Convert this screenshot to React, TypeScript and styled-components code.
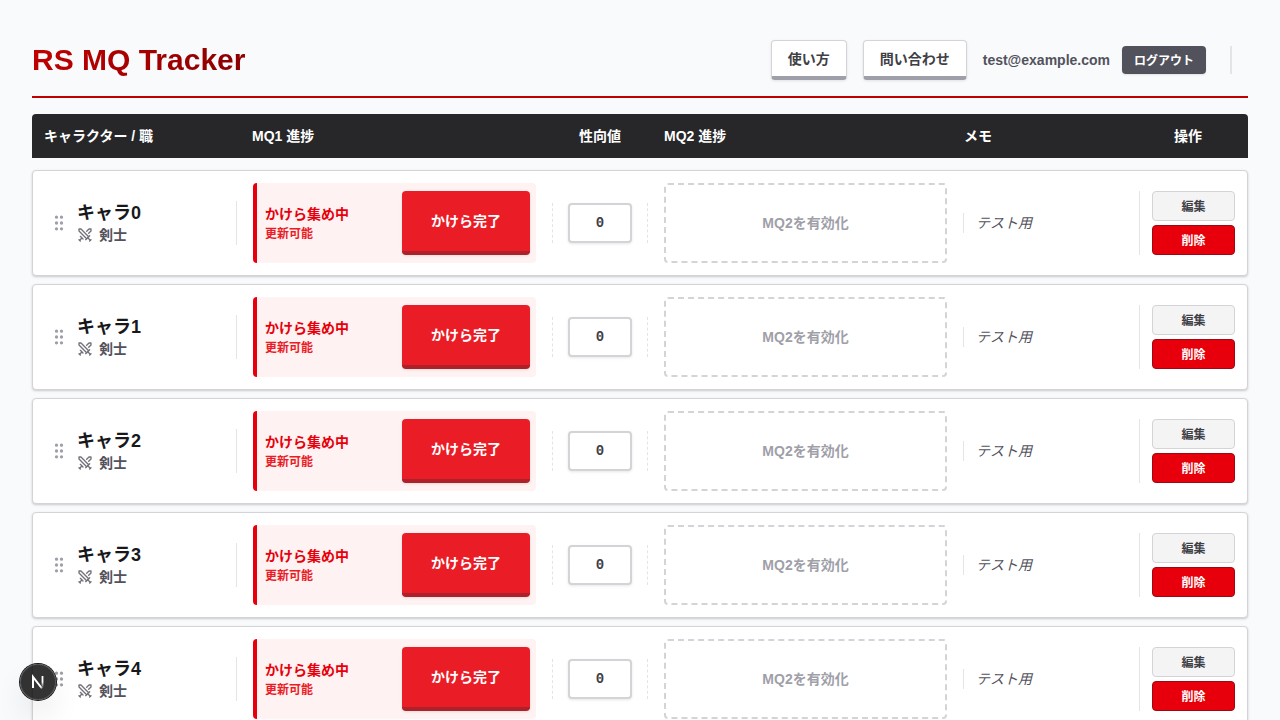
import React, { useState } from "react";
import styled, { createGlobalStyle, css } from "styled-components";
import { GripVertical, Swords } from "lucide-react";

const GlobalStyle = createGlobalStyle`
  *, *::before, *::after { box-sizing: border-box; }
  body {
    margin: 0;
    background: #f9fafc;
    color: #18181b;
    font-family: "Liberation Sans", "Noto Sans CJK JP", sans-serif;
    font-size: 14px;
    line-height: 20px;
  }
  button, input { font: inherit; margin: 0; }
  button { cursor: pointer; }
`;

const Page = styled.main`
  min-height: 100vh;
  padding: 32px;
`;

const TopBar = styled.header`
  display: flex;
  align-items: center;
  justify-content: space-between;
  padding: 8px 0 16px;
  margin-bottom: 16px;
  border-bottom: 2px solid #c00000;
`;

const Title = styled.h1`
  margin: 0;
  font-size: 30px;
  line-height: 36px;
  font-weight: 700;
  color: transparent;
  background: linear-gradient(to right, #c00000, #8b0000);
  background-clip: text;
  -webkit-background-clip: text;
`;

const TopActions = styled.div`
  display: flex;
  align-items: center;
  gap: 16px;
`;

const NavButton = styled.button`
  height: 40px;
  padding: 0 16px;
  border: 1px solid #d4d4d8;
  border-bottom: 4px solid #9f9fa9;
  border-radius: 4px;
  background: #fff;
  color: #3f3f46;
  font-weight: 700;
  box-shadow: 0 1px 3px rgba(0, 0, 0, 0.1);
`;

const Account = styled.div`
  display: flex;
  align-items: center;
  gap: 12px;
  margin-right: 16px;
  padding-right: 24px;
  border-right: 2px solid #e4e4e7;
  color: #52525c;
  font-weight: 700;
`;

const smallButton = css`
  border-radius: 4px;
  font-size: 12px;
  line-height: 16px;
  font-weight: 700;
`;

const LogoutButton = styled.button`
  ${smallButton}
  height: 28px;
  padding: 2px 12px 0;
  border: 0;
  background: #52525c;
  color: #fff;
  box-shadow: 0 1px 2px rgba(0, 0, 0, 0.1);
`;

const columns = css`
  display: grid;
  grid-template-columns: 192px minmax(0, 1fr) 96px minmax(0, 1fr) 160px 96px;
  column-gap: 16px;
  align-items: center;
`;

const ColumnHeader = styled.div`
  ${columns}
  padding: 12px;
  margin-bottom: 12px;
  border-radius: 4px 4px 0 0;
  background: #27272a;
  color: #fff;
  font-weight: 700;
`;

const Heading = styled.span<{ $center?: boolean }>`
  text-align: ${(p) => (p.$center ? "center" : "left")};
`;

const CardList = styled.ul`
  display: grid;
  gap: 8px;
  margin: 0;
  padding: 0;
  list-style: none;
`;

const Card = styled.li`
  ${columns}
  padding: 12px;
  border: 1px solid #d4d4d8;
  border-radius: 4px;
  background: #fff;
  box-shadow: 0 1px 3px rgba(0, 0, 0, 0.1), 0 1px 2px rgba(0, 0, 0, 0.1);
`;

const CharacterCell = styled.div`
  display: flex;
  align-items: center;
  gap: 4px;
  border-right: 1px solid #e4e4e7;
`;

const Handle = styled.button`
  display: flex;
  padding: 4px;
  border: 0;
  background: none;
  color: #9f9fa9;
  cursor: grab;
`;

const Name = styled.div`
  font-size: 18px;
  line-height: 24px;
  font-weight: 700;
`;

const Job = styled.div`
  display: flex;
  align-items: center;
  gap: 6px;
  color: #52525c;
  font-weight: 700;

  svg { color: #71717b; }
`;

const Progress = styled.div`
  display: flex;
  align-items: center;
  justify-content: space-between;
  height: 80px;
  padding: 8px 6px 8px 8px;
  border-left: 4px solid #e7000b;
  border-radius: 4px;
  background: #fef2f2;
`;

const Status = styled.div`
  display: grid;
  gap: 2px;
`;

const Stage = styled.div`
  color: #e7000b;
  font-weight: 700;
`;

const Availability = styled.div`
  color: #ea1d27;
  font-size: 12px;
  line-height: 16px;
  font-weight: 700;
`;

const CompleteButton = styled.button`
  width: 128px;
  height: 64px;
  padding: 0;
  border: 0;
  border-bottom: 4px solid #ac212a;
  border-radius: 4px;
  background: #ea1d27;
  color: #fff;
  font-weight: 700;
  box-shadow: 0 1px 3px rgba(0, 0, 0, 0.1);
`;

const KarmaCell = styled.div`
  display: flex;
  justify-content: center;
  border: 1px dashed #e4e4e7;
  border-width: 0 1px;
`;

const KarmaInput = styled.input`
  width: 64px;
  height: 40px;
  padding: 0;
  border: 2px solid #d4d4d8;
  border-radius: 4px;
  background: #fff;
  color: #3f3f46;
  font-family: "Liberation Mono", monospace;
  font-weight: 700;
  text-align: center;
  box-shadow: 0 1px 3px rgba(0, 0, 0, 0.1);
`;

const EnableButton = styled.button`
  height: 80px;
  border: 2px dashed #d4d4d8;
  border-radius: 4px;
  background: none;
  color: #9f9fa9;
  font-weight: 700;
`;

const Memo = styled.div`
  padding-left: 12px;
  border-left: 1px solid #e4e4e7;
  color: #52525c;
  font-style: italic;
`;

const RowActions = styled.div`
  display: grid;
  gap: 4px;
  padding-left: 12px;
  border-left: 1px solid #e4e4e7;
`;

const RowButton = styled.button<{ $danger?: boolean }>`
  ${smallButton}
  height: 30px;
  padding: 2px 0 0;
  border: 1px solid ${(p) => (p.$danger ? "#9f0712" : "#d4d4d8")};
  background: ${(p) => (p.$danger ? "#e7000b" : "#f4f4f5")};
  color: ${(p) => (p.$danger ? "#fff" : "#3f3f46")};
`;

const DevBadge = styled.button`
  position: fixed;
  left: 20px;
  bottom: 20px;
  display: flex;
  align-items: center;
  justify-content: center;
  width: 36px;
  height: 36px;
  padding: 0;
  border: 0;
  border-radius: 50%;
  background: rgba(0, 0, 0, 0.8);
  box-shadow: 0 0 0 1px #171717, inset 0 0 0 1px rgba(255, 255, 255, 0.14),
    0 16px 32px -8px rgba(0, 0, 0, 0.24);
`;

const characters = ["キャラ0", "キャラ1", "キャラ2", "キャラ3", "キャラ4"];

function CharacterCard({ name }: { name: string }) {
  const [karma, setKarma] = useState("0");
  return (
    <Card>
      <CharacterCell>
        <Handle type="button" aria-label="並び替え">
          <GripVertical size={20} />
        </Handle>
        <div>
          <Name>{name}</Name>
          <Job>
            <Swords size={16} />
            剣士
          </Job>
        </div>
      </CharacterCell>
      <Progress>
        <Status>
          <Stage>かけら集め中</Stage>
          <Availability>更新可能</Availability>
        </Status>
        <CompleteButton type="button">かけら完了</CompleteButton>
      </Progress>
      <KarmaCell>
        <KarmaInput
          aria-label="性向値"
          inputMode="numeric"
          value={karma}
          onChange={(e) => setKarma(e.target.value)}
        />
      </KarmaCell>
      <EnableButton type="button">MQ2を有効化</EnableButton>
      <Memo>テスト用</Memo>
      <RowActions>
        <RowButton type="button">編集</RowButton>
        <RowButton type="button" $danger>削除</RowButton>
      </RowActions>
    </Card>
  );
}

export default function App() {
  return (
    <>
      <GlobalStyle />
      <Page>
        <TopBar>
          <Title>RS MQ Tracker</Title>
          <TopActions>
            <NavButton type="button">使い方</NavButton>
            <NavButton type="button">問い合わせ</NavButton>
            <Account>
              <span>test@example.com</span>
              <LogoutButton type="button">ログアウト</LogoutButton>
            </Account>
          </TopActions>
        </TopBar>
        <ColumnHeader>
          <Heading>キャラクター / 職</Heading>
          <Heading>MQ1 進捗</Heading>
          <Heading $center>性向値</Heading>
          <Heading>MQ2 進捗</Heading>
          <Heading>メモ</Heading>
          <Heading $center>操作</Heading>
        </ColumnHeader>
        <CardList>
          {characters.map((name) => (
            <CharacterCard key={name} name={name} />
          ))}
        </CardList>
      </Page>
      <DevBadge type="button" aria-label="Next.js">
        <svg width="36" height="36" viewBox="0 0 36 36" fill="none">
          <defs>
            <linearGradient id="stem" x1="0" y1="12" x2="0" y2="24" gradientUnits="userSpaceOnUse">
              <stop stopColor="#fff" />
              <stop offset="0.5" stopColor="#fff" />
              <stop offset="1" stopColor="#fff" stopOpacity="0" />
            </linearGradient>
            <linearGradient id="slash" x1="13" y1="12" x2="23" y2="25" gradientUnits="userSpaceOnUse">
              <stop stopColor="#fff" />
              <stop offset="0.8" stopColor="#fff" />
              <stop offset="1" stopColor="#fff" stopOpacity="0.2" />
            </linearGradient>
          </defs>
          <path d="M13 24V13L22 24.500" stroke="url(#slash)" strokeWidth="2" />
          <path d="M22.500 12V24" stroke="url(#stem)" strokeWidth="1.800" />
        </svg>
      </DevBadge>
    </>
  );
}
